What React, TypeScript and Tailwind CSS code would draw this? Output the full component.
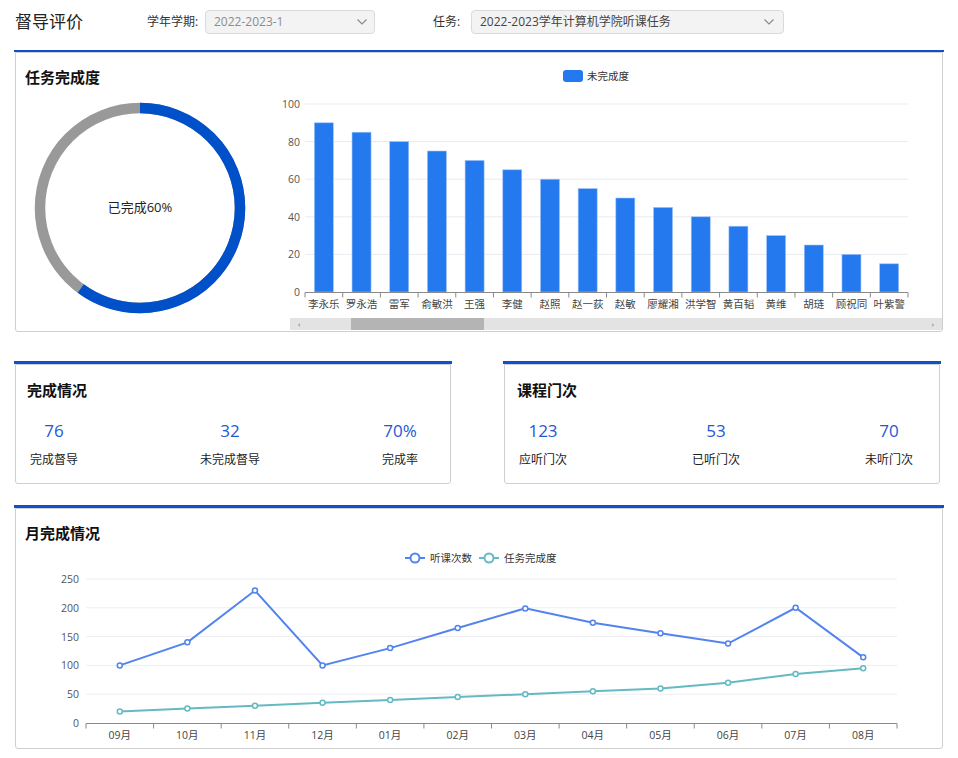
import React from "react";

const FONT = "'Open Sans','Noto Sans CJK SC',sans-serif";

const names = ["李永乐","罗永浩","雷军","俞敏洪","王强","李健","赵照","赵一荻","赵敏","廖耀湘","洪学智","黄百韬","黄维","胡琏","顾祝同","叶紫警"];
const barVals = [90,85,80,75,70,65,60,55,50,45,40,35,30,25,20,15];
const months = ["09月","10月","11月","12月","01月","02月","03月","04月","05月","06月","07月","08月"];
const s1 = [100,140,230,100,130,165,199,174,156,138,200,114];
const s2 = [20,25,30,35,40,45,50,55,60,70,85,95];

function Chevron() {
  return (
    <svg width="12" height="8" viewBox="0 0 12 8" fill="none">
      <polyline points="1.5,1.5 6,6 10.5,1.5" stroke="#8a8a8a" strokeWidth="1.2" />
    </svg>
  );
}

function Donut() {
  const r = 100;
  const c = 2 * Math.PI * r;
  return (
    <svg width="212" height="212" viewBox="0 0 212 212">
      <circle cx="106" cy="106" r={r} fill="none" stroke="#999999" strokeWidth="10.5" />
      <circle
        cx="106"
        cy="106"
        r={r}
        fill="none"
        stroke="#0050c9"
        strokeWidth="10.5"
        strokeDasharray={`${c * 0.6} ${c}`}
        transform="rotate(-90 106 106)"
      />
      <text x="106" y="110" textAnchor="middle" fontSize="13" fill="#222" fontFamily={FONT}>已完成60%</text>
    </svg>
  );
}

function BarChart() {
  const x0 = 25, x1 = 628;
  const cw = (x1 - x0) / 16;
  const gy = (v: number) => 239 - v * 1.88;
  return (
    <svg width="662" height="265" viewBox="0 0 662 265" fontFamily={FONT}>
      <rect x="283" y="17" width="20" height="12" rx="3" fill="#2479ef" />
      <text x="307" y="27" fontSize="10.5" fill="#333">未完成度</text>
      {[0, 20, 40, 60, 80, 100].map((v) => (
        <g key={v}>
          {v !== 0 && <line x1={x0} x2={x1} y1={gy(v)} y2={gy(v)} stroke="#e8ebf0" strokeWidth="1" />}
          <text x="20" y={gy(v) + 4} textAnchor="end" fontSize="10.5" fill="#555">{v}</text>
        </g>
      ))}
      {barVals.map((v, i) => {
        const cx = x0 + cw * (i + 0.5);
        return (
          <rect key={i} x={cx - 9.5} y={gy(v)} width="19" height={239 - gy(v)} fill="#2479ef" stroke="#9fc3f7" strokeWidth="0.6" />
        );
      })}
      <line x1={x0} x2={x1} y1="239.5" y2="239.5" stroke="#8a8a8a" strokeWidth="1" />
      {Array.from({ length: 17 }).map((_, i) => (
        <line key={i} x1={x0 + cw * i} x2={x0 + cw * i} y1="239.5" y2="244.5" stroke="#8a8a8a" strokeWidth="1" />
      ))}
      {names.map((n, i) => (
        <text key={n} x={x0 + cw * (i + 0.5)} y="255" textAnchor="middle" fontSize="10.5" fill="#444">{n}</text>
      ))}
    </svg>
  );
}

function LineChart() {
  const x0 = 70, x1 = 881;
  const cw = (x1 - x0) / 12;
  const gy = (v: number) => 180 - v * 0.576;
  const cx = (i: number) => x0 + cw * (i + 0.5);
  const p1 = s1.map((v, i) => `${cx(i)},${gy(v)}`).join(" ");
  const p2 = s2.map((v, i) => `${cx(i)},${gy(v)}`).join(" ");
  const c1 = "#5283ee";
  const c2 = "#64bac2";
  return (
    <svg width="926" height="204" viewBox="0 0 926 204" fontFamily={FONT}>
      <line x1="389" x2="409" y1="15" y2="15" stroke={c1} strokeWidth="2" />
      <circle cx="399" cy="15" r="4.5" fill="#fff" stroke={c1} strokeWidth="2" />
      <text x="414" y="19" fontSize="10.5" fill="#333">听课次数</text>
      <line x1="463" x2="483" y1="15" y2="15" stroke={c2} strokeWidth="2" />
      <circle cx="473" cy="15" r="4.5" fill="#fff" stroke={c2} strokeWidth="2" />
      <text x="488" y="19" fontSize="10.5" fill="#333">任务完成度</text>
      {[0, 50, 100, 150, 200, 250].map((v) => (
        <g key={v}>
          {v !== 0 && <line x1={x0} x2={x1} y1={gy(v)} y2={gy(v)} stroke="#eceef2" strokeWidth="1" />}
          <text x="63" y={gy(v) + 4} textAnchor="end" fontSize="10.5" fill="#555">{v}</text>
        </g>
      ))}
      <line x1={x0} x2={x1} y1="180.5" y2="180.5" stroke="#8a8a8a" strokeWidth="1" />
      {Array.from({ length: 13 }).map((_, i) => (
        <line key={i} x1={x0 + cw * i} x2={x0 + cw * i} y1="180.5" y2="185.5" stroke="#8a8a8a" strokeWidth="1" />
      ))}
      {months.map((m, i) => (
        <text key={m} x={cx(i)} y="196" textAnchor="middle" fontSize="10.5" fill="#444">{m}</text>
      ))}
      <polyline points={p2} fill="none" stroke={c2} strokeWidth="2" />
      <polyline points={p1} fill="none" stroke={c1} strokeWidth="2" />
      {s2.map((v, i) => (
        <circle key={"b" + i} cx={cx(i)} cy={gy(v)} r="2.5" fill="#fff" stroke={c2} strokeWidth="1.5" />
      ))}
      {s1.map((v, i) => (
        <circle key={"a" + i} cx={cx(i)} cy={gy(v)} r="2.5" fill="#fff" stroke={c1} strokeWidth="1.5" />
      ))}
    </svg>
  );
}

function Stat({ value, label }: { value: string; label: string }) {
  return (
    <div className="flex flex-col items-center">
      <div className="h-[24px] leading-[24px] text-[17px] text-[#1d58d6]">{value}</div>
      <div className="mt-[8px] h-[18px] leading-[18px] text-[12px] text-[#222]">{label}</div>
    </div>
  );
}

export default function App() {
  return (
    <div className="w-[958px] h-[758px] bg-white overflow-hidden font-['Open_Sans','Noto_Sans_CJK_SC',sans-serif] text-[#222]">
      {/* header */}
      <div className="h-[50px] flex items-center pl-[15px] pb-[6px]">
        <div className="text-[17px] leading-[22px] text-[#222] w-[132px]">督导评价</div>
        <div className="text-[12px] text-[#333] w-[58px]">学年学期:</div>
        <div className="w-[170px] h-[24px] rounded-[4px] border border-[#dadada] bg-[#f3f3f3] flex items-center justify-between pl-[8px] pr-[6px]">
          <span className="text-[12px] text-[#8c8c8c]">2022-2023-1</span>
          <Chevron />
        </div>
        <div className="text-[12px] text-[#333] ml-[58px] w-[38px]">任务:</div>
        <div className="w-[313px] h-[24px] rounded-[4px] border border-[#dadada] bg-[#f3f3f3] flex items-center justify-between pl-[8px] pr-[8px]">
          <span className="text-[12px] text-[#444]">2022-2023学年计算机学院听课任务</span>
          <Chevron />
        </div>
      </div>

      {/* panel 1 */}
      <div className="mx-[14px]">
        <div className="h-[2px] bg-[#0d52cc]" />
        <div className="mx-[1px] h-[280px] border border-[#cfcfcf] rounded-b-[3px] flex">
          <div className="w-[264px]">
            <div className="pt-[14px] pl-[9px] h-[34px] leading-[20px] text-[15px] font-bold text-[#111]">任务完成度</div>
            <div className="mt-[15px] ml-[18px]">
              <Donut />
            </div>
          </div>
          <div className="flex-1 flex flex-col">
            <BarChart />
            <div className="ml-[10px] h-[12px] bg-[#e3e3e3] relative flex items-center justify-between px-[8px] text-[8px] leading-[8px] text-[#666]">
              <span>‹</span>
              <span>›</span>
              <div className="absolute left-[61px] top-0 w-[133px] h-[12px] bg-[#b4b4b4]" />
            </div>
          </div>
        </div>
      </div>

      {/* panels 2 & 3 */}
      <div className="flex mt-[29px]">
        <div className="ml-[14px] w-[438px]">
          <div className="h-[3px] bg-[#0d52cc]" />
          <div className="mx-[1px] h-[120px] border border-[#cfcfcf] rounded-b-[3px] pt-[15px] pl-[11px] pr-[32px]">
            <div className="h-[20px] leading-[20px] text-[15px] font-bold text-[#111]">完成情况</div>
            <div className="mt-[19px] pl-[3px] flex justify-between">
              <Stat value="76" label="完成督导" />
              <Stat value="32" label="未完成督导" />
              <Stat value="70%" label="完成率" />
            </div>
          </div>
        </div>
        <div className="ml-[51px] w-[438px]">
          <div className="h-[3px] bg-[#0d52cc]" />
          <div className="mx-[1px] h-[120px] border border-[#cfcfcf] rounded-b-[3px] pt-[15px] pl-[12px] pr-[26px]">
            <div className="h-[20px] leading-[20px] text-[15px] font-bold text-[#111]">课程门次</div>
            <div className="mt-[19px] pl-[2px] flex justify-between">
              <Stat value="123" label="应听门次" />
              <Stat value="53" label="已听门次" />
              <Stat value="70" label="未听门次" />
            </div>
          </div>
        </div>
      </div>

      {/* panel 4 */}
      <div className="mx-[14px] mt-[21px]">
        <div className="h-[3px] bg-[#0d52cc]" />
        <div className="mx-[1px] h-[241px] border border-[#cfcfcf] rounded-b-[3px]">
          <div className="pt-[14px] pl-[9px] h-[34px] leading-[20px] text-[15px] font-bold text-[#111]">月完成情况</div>
          <LineChart />
        </div>
      </div>
    </div>
  );
}
